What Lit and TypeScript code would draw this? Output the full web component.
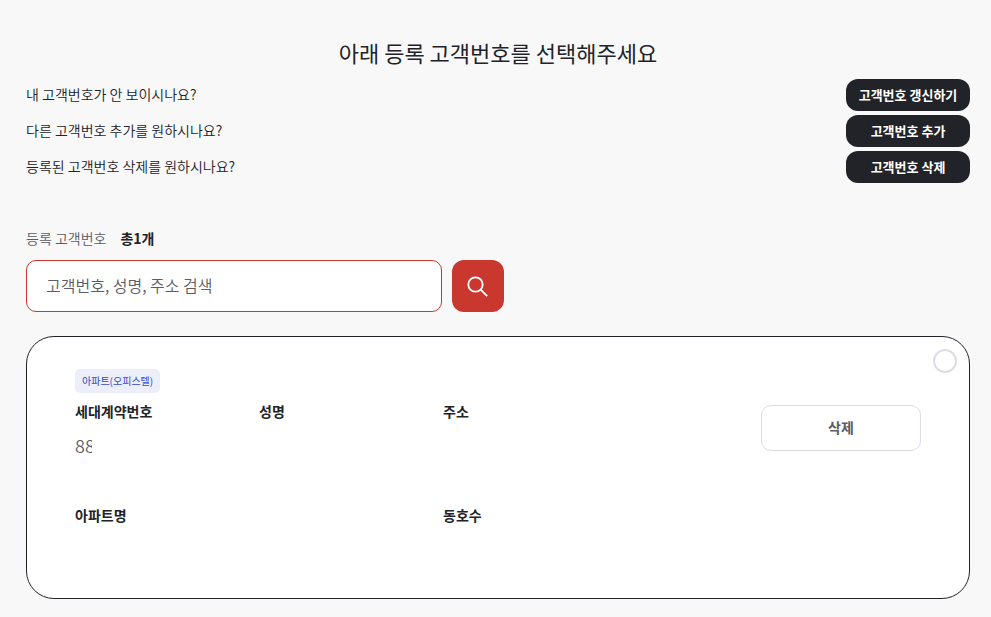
import { LitElement, html, css } from "lit";
import { customElement, state } from "lit/decorators.js";

const guides = [
  { question: "내 고객번호가 안 보이시나요?", action: "고객번호 갱신하기" },
  { question: "다른 고객번호 추가를 원하시나요?", action: "고객번호 추가" },
  { question: "등록된 고객번호 삭제를 원하시나요?", action: "고객번호 삭제" },
];

@customElement("app-root")
class AppRoot extends LitElement {
  @state() private keyword = "";

  static styles = css`
    :host {
      display: block;
      box-sizing: border-box;
      min-height: 100vh;
      padding: 35px 21px 18px 26px;
      background: #f8f8f8;
      color: #222329;
      font-family: "Noto Sans CJK KR", "Noto Sans KR", sans-serif;
      font-size: 14px;
      line-height: 20px;
    }
    * {
      box-sizing: border-box;
    }
    button,
    input {
      font-family: inherit;
      margin: 0;
    }
    button {
      cursor: pointer;
      padding: 0 0 2px;
    }
    .title {
      margin: 0 0 10px;
      font-size: 22px;
      line-height: 34px;
      font-weight: 400;
      text-align: center;
    }
    .guides {
      list-style: none;
      margin: 0 0 44px;
      padding: 0;
      display: grid;
      gap: 4px;
    }
    .guide {
      display: flex;
      align-items: center;
      justify-content: space-between;
      font-weight: 350;
    }
    .question {
      padding-bottom: 2px;
    }
    .dark {
      width: 124px;
      height: 32px;
      border: 0;
      border-radius: 12px;
      background: #222329;
      color: #fff;
      font-size: 13px;
      font-weight: 700;
    }
    .summary {
      display: flex;
      gap: 14px;
      margin: 0 0 11px;
      line-height: 22px;
      font-weight: 350;
      color: #5b5c64;
    }
    .summary strong {
      font-weight: 700;
      color: #222329;
    }
    .search {
      display: flex;
      gap: 10px;
      max-width: 478px;
      margin: 0 0 24px;
    }
    .keyword {
      flex: 1;
      min-width: 0;
      height: 52px;
      padding: 0 19px 2px;
      border: 1px solid #c9372f;
      border-radius: 10px;
      background: #fff;
      color: #222329;
      font-size: 16px;
      font-weight: 350;
    }
    .keyword::placeholder {
      color: #5b5c64;
      opacity: 1;
    }
    .submit {
      display: grid;
      place-items: center;
      width: 52px;
      height: 52px;
      padding: 0;
      border: 0;
      border-radius: 12px;
      background: #c9372f;
    }
    .card {
      position: relative;
      padding: 32px 48px 18px;
      border: 1px solid #222329;
      border-radius: 28px;
      background: #fff;
    }
    .pick {
      appearance: none;
      position: absolute;
      top: 12px;
      right: 12px;
      width: 24px;
      height: 24px;
      margin: 0;
      border: 2px solid #dcdde5;
      border-radius: 50%;
      background: #fff;
    }
    .pick:checked {
      border: 7px solid #c9372f;
    }
    .badge {
      display: inline-block;
      padding: 0 7px;
      border-radius: 5px;
      background: #eceefa;
      color: #3548c8;
      font-size: 10px;
      line-height: 24px;
      vertical-align: top;
    }
    .body {
      display: grid;
      grid-template-columns: minmax(0, 1fr) 160px;
      align-items: start;
      margin-top: 7px;
    }
    .fields {
      display: grid;
      grid-template-columns: minmax(0, 184px) minmax(0, 184px) minmax(0, 1fr);
      row-gap: 28px;
      margin: 0;
    }
    .field {
      min-height: 76px;
    }
    .name {
      grid-column: span 2;
    }
    dt {
      line-height: 22px;
      font-weight: 700;
    }
    dd {
      margin: 10px 0 0;
      font-size: 18px;
      line-height: 26px;
      font-weight: 350;
      color: #5b5c64;
    }
    .masked {
      width: 17px;
      overflow: hidden;
    }
    .remove {
      height: 46px;
      margin-top: 5px;
      border: 1px solid #dcdde5;
      border-radius: 10px;
      background: #fff;
      color: #5b5c64;
      font-size: 14px;
      font-weight: 700;
    }
  `;

  render() {
    return html`
      <main>
        <h1 class="title">아래 등록 고객번호를 선택해주세요</h1>
        <ul class="guides">
          ${guides.map(
            (g) => html`<li class="guide">
              <span class="question">${g.question}</span>
              <button type="button" class="dark">${g.action}</button>
            </li>`
          )}
        </ul>
        <p class="summary"><span>등록 고객번호</span><strong>총1개</strong></p>
        <form class="search" role="search" @submit=${(e: Event) => e.preventDefault()}>
          <input
            class="keyword"
            type="text"
            aria-label="고객번호, 성명, 주소 검색"
            placeholder="고객번호, 성명, 주소 검색"
            .value=${this.keyword}
            @input=${(e: Event) => (this.keyword = (e.target as HTMLInputElement).value)}
          />
          <button class="submit" type="submit" aria-label="검색">
            <svg width="24" height="24" viewBox="0 0 24 24" fill="none" stroke="#fff" stroke-width="1.8" aria-hidden="true">
              <circle cx="9.5" cy="10.5" r="7.2" />
              <path d="M14.7 15.7 21.2 22.2" />
            </svg>
          </button>
        </form>
        <section class="card">
          <input class="pick" type="radio" name="customer" aria-label="세대계약번호" />
          <span class="badge">아파트(오피스텔)</span>
          <div class="body">
            <dl class="fields">
              <div class="field"><dt>세대계약번호</dt><dd class="masked">88</dd></div>
              <div class="field"><dt>성명</dt></div>
              <div class="field"><dt>주소</dt></div>
              <div class="field name"><dt>아파트명</dt></div>
              <div class="field"><dt>동호수</dt></div>
            </dl>
            <button type="button" class="remove">삭제</button>
          </div>
        </section>
      </main>
    `;
  }
}
